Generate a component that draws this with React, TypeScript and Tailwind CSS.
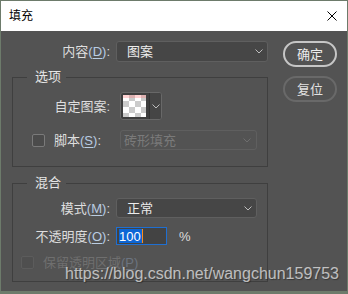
import React from "react";

const FONT = "font-['Liberation_Sans','Noto_Sans_CJK_SC',sans-serif]";

function Chevron({ color = "#bdbdbd" }: { color?: string }) {
  return (
    <svg width="8" height="5" viewBox="0 0 8 5" fill="none">
      <polyline points="0.5,0.5 4,4 7.5,0.5" stroke={color} strokeWidth="1" />
    </svg>
  );
}

// mnemonic like (D)
function Key({ k, dim }: { k: string; dim?: boolean }) {
  return (
    <span className={dim ? "text-[#6c7480]" : "text-[#b9cce2]"}>
      (<span className="underline underline-offset-2">{k}</span>)
    </span>
  );
}

export default function App() {
  return (
    <div
      className={`
        relative flex h-[294px] w-[348px] flex-col
        border-x border-t border-b-[3px] border-[#6d7b6b]
        bg-[#535353] ${FONT}
      `}
    >
      {/* ================= TITLE BAR ================= */}
      <div className="flex h-[30px] items-center justify-between bg-white pl-[8px] pr-[10px]">
        <span className="text-[12px] leading-none text-black">填充</span>
        <svg width="10" height="10" viewBox="0 0 10 10">
          <path d="M0.5 0.5 L9.5 9.5 M9.5 0.5 L0.5 9.5" stroke="#000" strokeWidth="1" />
        </svg>
      </div>

      {/* ================= BODY ================= */}
      <div className="flex flex-1 pl-[11px] pr-[10px] pt-[10px] text-[13px] text-[#dedede]">
        {/* LEFT COLUMN */}
        <div className="flex w-[256px] flex-col">
          {/* content row */}
          <div className="flex h-[21px] items-center">
            <div className="w-[98px] text-right leading-none">
              内容<Key k="D" />:
            </div>
            <div className="ml-[6px] flex h-full flex-1 items-center justify-between rounded-[3px] border border-[#5f5f5f] bg-[#464646] pl-[10px] pr-[4px]">
              <span className="leading-none text-[#ececec]">图案</span>
              <Chevron />
            </div>
          </div>

          {/* ================= 选项 ================= */}
          <fieldset className="mt-[6px] border border-[#3f3f3f] pb-[16px]">
            <legend className="ml-[14px] pl-2 pr-[5px] text-[13px] leading-[18px] text-[#e6e6e6]">
              选项
            </legend>

            <div className="mt-[6px] flex h-[28px] items-center">
              <div className="w-[97px] text-right leading-none">自定图案:</div>
              <div className="ml-[10px] flex h-full w-[42px] overflow-hidden rounded-[3px] border border-[#686868] bg-[#3e3e3e]">
                <div className="p-[2px] pr-[3px]">
                  <div className="h-[22px] w-[23px] bg-[conic-gradient(#cbcbcb_25%,#ffffff_0_50%,#cbcbcb_0_75%,#ffffff_0)] bg-[length:12px_12px]">
                    <div className="h-[3px] w-full bg-[#ff8080]/35" />
                  </div>
                </div>
                <div className="flex flex-1 items-center justify-center border-l border-[#333333] bg-[#454545]">
                  <Chevron />
                </div>
              </div>
            </div>

            <div className="mt-[10px] flex h-[20px] items-center">
              <div className="ml-[19px] h-[13px] w-[13px] rounded-[2px] border border-[#7a7a7a] bg-[#4b4b4b]" />
              <div className="ml-[9px] w-[66px] leading-none">
                脚本<Key k="S" />:
              </div>
              <div className="flex h-full w-[137px] items-center justify-between rounded-[3px] border border-[#5f5f5f] pl-[3px] pr-[5px]">
                <span className="leading-none text-[#7a7a7a]">砖形填充</span>
                <Chevron color="#6e6e6e" />
              </div>
            </div>
          </fieldset>

          {/* ================= 混合 ================= */}
          <fieldset className="mt-[7px] border border-[#3f3f3f] pb-[12px]">
            <legend className="ml-[14px] pl-2 pr-[5px] text-[13px] leading-[18px] text-[#e6e6e6]">
              混合
            </legend>

            <div className="mt-[6px] flex h-[20px] items-center">
              <div className="w-[97px] text-right leading-none">
                模式<Key k="M" />:
              </div>
              <div className="ml-[6px] flex h-full w-[141px] items-center justify-between rounded-[3px] border border-[#5f5f5f] bg-[#464646] pl-[10px] pr-[4px]">
                <span className="leading-none text-[#ececec]">正常</span>
                <Chevron />
              </div>
            </div>

            <div className="mt-[9px] flex h-[18px] items-center">
              <div className="w-[97px] text-right leading-none">
                不透明度<Key k="O" />:
              </div>
              <div className="ml-[6px] flex h-full w-[51px] items-center border border-[#1f6fd1] bg-[#434343] pl-[2px]">
                <span className="flex h-[14px] items-center bg-[#0c66d6] pr-[1px] text-[13px] leading-none text-white">
                  100
                </span>
                <span className="h-[14px] w-px bg-[#ff8c1a]" />
              </div>
              <span className="ml-[12px] leading-none">%</span>
            </div>

            <div className="mt-[11px] flex h-[13px] items-center">
              <div className="ml-[8px] h-[13px] w-[13px] rounded-[2px] border border-[#5c5c5c] bg-[#4f4f4f]" />
              <span className="ml-[9px] leading-none text-[#6f6f6f]">
                保留透明区域<Key k="P" dim />
              </span>
            </div>
          </fieldset>
        </div>

        {/* RIGHT COLUMN */}
        <div className="ml-[15px] flex w-[54px] flex-col gap-[9px]">
          <button className="flex h-[26px] items-center justify-center rounded-full border-2 border-[#c6c6c6] text-[13px] leading-none text-[#ececec]">
            确定
          </button>
          <button className="flex h-[26px] items-center justify-center rounded-full border-2 border-[#696969] text-[13px] leading-none text-[#e2e2e2]">
            复位
          </button>
        </div>
      </div>

      {/* ================= WATERMARK ================= */}
      <div className="absolute left-[64px] top-[265px] font-['Liberation_Sans',sans-serif] text-[16px] leading-none text-white/65 [text-shadow:1px_1px_1px_rgba(0,0,0,0.35)]">
        https://blog.csdn.net/wangchun159753
      </div>
    </div>
  );
}
